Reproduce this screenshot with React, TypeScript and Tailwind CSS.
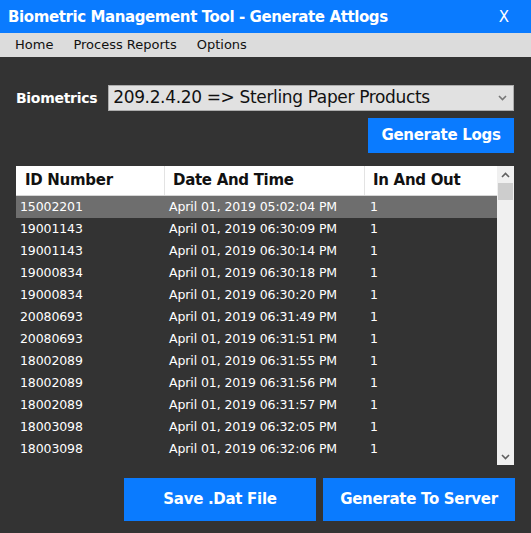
import React from 'react'

const ROWS: [string, string, string][] = [
  ['15002201', 'April 01, 2019 05:02:04 PM', '1'],
  ['19001143', 'April 01, 2019 06:30:09 PM', '1'],
  ['19001143', 'April 01, 2019 06:30:14 PM', '1'],
  ['19000834', 'April 01, 2019 06:30:18 PM', '1'],
  ['19000834', 'April 01, 2019 06:30:20 PM', '1'],
  ['20080693', 'April 01, 2019 06:31:49 PM', '1'],
  ['20080693', 'April 01, 2019 06:31:51 PM', '1'],
  ['18002089', 'April 01, 2019 06:31:55 PM', '1'],
  ['18002089', 'April 01, 2019 06:31:56 PM', '1'],
  ['18002089', 'April 01, 2019 06:31:57 PM', '1'],
  ['18003098', 'April 01, 2019 06:32:05 PM', '1'],
  ['18003098', 'April 01, 2019 06:32:06 PM', '1'],
]

const Chevron = ({ up = false, className = '' }: { up?: boolean; className?: string }) => (
  <svg width="9" height="6" viewBox="0 0 9 6" className={className}>
    <path
      d={up ? 'M1 5 L4.5 1.5 L8 5' : 'M1 1 L4.5 4.5 L8 1'}
      fill="none"
      stroke="currentColor"
      strokeWidth="1.6"
    />
  </svg>
)

export default function App() {
  return (
    <div className="w-[531px] h-[533px] bg-[#333333] flex flex-col overflow-hidden font-['DejaVu_Sans',sans-serif]">
      {/* title bar */}
      <div className="h-[33px] shrink-0 bg-[#0a7bff] flex items-center justify-between pl-[8px] pr-[22px] pt-[1px] text-white">
        <span className="text-[15px] font-bold tracking-[-0.4px]">Biometric Management Tool - Generate Attlogs</span>
        <span className="text-[15px]">X</span>
      </div>

      {/* menu */}
      <div className="h-[24px] shrink-0 bg-[#dcdcdc] flex items-center pl-[15px] gap-[20px] text-[13px] text-[#111]">
        <span>Home</span>
        <span>Process Reports</span>
        <span>Options</span>
      </div>

      <div className="flex flex-col pl-[16px] pr-[17px] pt-[28px]">
        <div className="flex items-center gap-[11px]">
          <span className="text-white font-bold text-[14px] tracking-[-0.3px]">Biometrics</span>
          <div className="flex-1 h-[26px] bg-[#e1e1e1] border border-[#adadad] flex items-center justify-between pl-[4px] pr-[6px]">
            <span className="text-[17px] text-[#111] tracking-[-0.35px]">209.2.4.20 =&gt; Sterling Paper Products</span>
            <Chevron className="text-[#777]" />
          </div>
        </div>

        <button className="self-end mt-[7px] w-[146px] h-[35px] bg-[#0a7bff] text-white font-bold text-[15px] tracking-[-0.3px]">
          Generate Logs
        </button>

        <div className="mt-[13px] h-[299px] flex">
          <div className="flex-1 flex flex-col overflow-hidden">
            <div className="h-[30px] shrink-0 bg-white grid grid-cols-[149px_200px_1fr] border-b border-[#d5d5d5] text-[15px] font-bold text-[#111] tracking-[-0.3px]">
              <div className="flex items-center pl-[9px] border-r border-[#e3e3e3]">ID Number</div>
              <div className="flex items-center pl-[8px] border-r border-[#e3e3e3]">Date And Time</div>
              <div className="flex items-center pl-[8px]">In And Out</div>
            </div>
            {ROWS.map((r, i) => (
              <div
                key={i}
                className={`h-[22px] shrink-0 grid grid-cols-[149px_200px_1fr] items-center pt-[1px] text-[12.5px] text-white tracking-[-0.1px] ${
                  i === 0 ? 'bg-[#6e6e6e]' : ''
                }`}
              >
                <span className="pl-[4px]">{r[0]}</span>
                <span className="pl-[4px]">{r[1]}</span>
                <span className="pl-[5px]">{r[2]}</span>
              </div>
            ))}
          </div>
          <div className="w-[17px] bg-[#f0f0f0] flex flex-col items-center">
            <div className="h-[17px] flex items-center justify-center text-[#606060]">
              <Chevron up />
            </div>
            <div className="w-[15px] h-[17px] bg-[#cdcdcd]" />
            <div className="flex-1" />
            <div className="h-[17px] flex items-center justify-center text-[#606060]">
              <Chevron />
            </div>
          </div>
        </div>

        <div className="mt-[13px] flex justify-end gap-[7px] -mr-[1px]">
          <button className="w-[192px] h-[43px] bg-[#0a7bff] text-white font-bold text-[15px] tracking-[-0.3px]">
            Save .Dat File
          </button>
          <button className="w-[192px] h-[43px] bg-[#0a7bff] text-white font-bold text-[15px] tracking-[-0.3px]">
            Generate To Server
          </button>
        </div>
      </div>
    </div>
  )
}
